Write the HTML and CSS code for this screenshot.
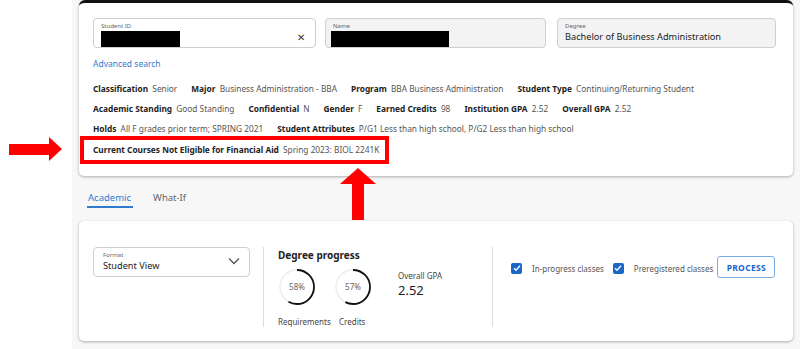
FILE: index.html
```html
<!DOCTYPE html>
<html lang="en">
<head>
  <meta charset="UTF-8">
  <title>Student Degree Audit</title>
  <link rel="stylesheet" href="styles.css">
</head>
<body>

<div class="page">
  <div class="card top-card">
    <div class="fields">
      <div class="field">
        <span class="field-label">Student ID</span>
        <div class="field-row">
          <span class="redact redact-id"></span>
          <span class="clear">&#x2715;</span>
        </div>
      </div>
      <div class="field filled">
        <span class="field-label">Name</span>
        <span class="redact redact-name"></span>
      </div>
      <div class="field filled">
        <span class="field-label">Degree</span>
        <span class="field-value">Bachelor of Business Administration</span>
      </div>
    </div>

    <a class="adv-link" href="#">Advanced search</a>

    <div class="info-row">
      <span><b>Classification</b> Senior</span>
      <span><b>Major</b> Business Administration - BBA</span>
      <span><b>Program</b> BBA Business Administration</span>
      <span><b>Student Type</b> Continuing/Returning Student</span>
    </div>
    <div class="info-row">
      <span><b>Academic Standing</b> Good Standing</span>
      <span><b>Confidential</b> N</span>
      <span><b>Gender</b> F</span>
      <span><b>Earned Credits</b> 98</span>
      <span><b>Institution GPA</b> 2.52</span>
      <span><b>Overall GPA</b> 2.52</span>
    </div>
    <div class="info-row">
      <span><b>Holds</b> All F grades prior term; SPRING 2021</span>
      <span><b>Student Attributes</b> P/G1 Less than high school, P/G2 Less than high school</span>
    </div>
    <div class="info-row">
      <span><b>Current Courses Not Eligible for Financial Aid</b> Spring 2023: BIOL 2241K</span>
    </div>
  </div>

  <div class="tabs">
    <span class="tab active">Academic</span>
    <span class="tab">What-If</span>
  </div>

  <div class="card bottom-card">
    <div class="select">
      <div>
        <span class="field-label">Format</span>
        <span class="field-value">Student View</span>
      </div>
      <svg width="12" height="8" viewBox="0 0 12 8"><path d="M1 1.5l5 5 5-5" fill="none" stroke="#555" stroke-width="1.3"/></svg>
    </div>

    <div class="progress">
      <h3>Degree progress</h3>
      <div class="progress-row">
        <div class="meter">
          <svg width="38" height="38" viewBox="0 0 38 38">
            <circle cx="19" cy="19" r="17" fill="none" stroke="#eee" stroke-width="1.5"/>
            <circle cx="19" cy="19" r="17" fill="none" stroke="#111" stroke-width="1.8"
              stroke-dasharray="62 107" transform="rotate(-90 19 19)"/>
          </svg>
          <span class="pct">58%</span>
          <span class="meter-label">Requirements</span>
        </div>
        <div class="meter second">
          <svg width="38" height="38" viewBox="0 0 38 38">
            <circle cx="19" cy="19" r="17" fill="none" stroke="#eee" stroke-width="1.5"/>
            <circle cx="19" cy="19" r="17" fill="none" stroke="#111" stroke-width="1.8"
              stroke-dasharray="61 107" transform="rotate(-90 19 19)"/>
          </svg>
          <span class="pct">57%</span>
          <span class="meter-label">Credits</span>
        </div>
        <div class="gpa">
          <span class="gpa-label">Overall GPA</span>
          <span class="gpa-value">2.52</span>
        </div>
      </div>
    </div>

    <div class="options">
      <label class="check"><span class="box"><svg width="10" height="10" viewBox="0 0 10 10"><path d="M2 5.2l2 2 4-4.4" fill="none" stroke="#fff" stroke-width="1.4"/></svg></span>In-progress classes</label>
      <label class="check"><span class="box"><svg width="10" height="10" viewBox="0 0 10 10"><path d="M2 5.2l2 2 4-4.4" fill="none" stroke="#fff" stroke-width="1.4"/></svg></span>Preregistered classes</label>
      <button class="process">PROCESS</button>
    </div>
  </div>
</div>

<!-- anotacoes em vermelho -->
<div class="mark-box"></div>
<div class="arrow-left"><span class="shaft"></span><span class="head"></span></div>
<div class="arrow-up"><span class="head"></span><span class="shaft"></span></div>

</body>
</html>
```

FILE: styles.css
```css
body {
  margin: 0;
  padding: 0;
  background: #fff;
  font-family: "Noto Sans", "Open Sans", sans-serif;
  color: #333;
  height: 349px;
  overflow: hidden;
}
.page {
  margin-left: 72px;
  background: #f7f7f7;
  height: 349px;
  padding: 0 7px 0 7px;
}
.card {
  background: #fff;
  border-radius: 5px;
  box-shadow: 0 1px 3px rgba(0,0,0,0.3);
}
.top-card {
  border-top: 3px solid #111;
  border-radius: 6px 6px 5px 5px;
  padding: 15px 15px 0 14px;
  box-sizing: border-box;
  height: 176px;
}
.fields {
  display: grid;
  grid-template-columns: 223px 221px 221px;
  column-gap: 9px;
}
.fields .field:nth-child(3) {
  margin-left: 2px;
}
.field {
  height: 30px;
  box-sizing: border-box;
  border: 1px solid #cfcfcf;
  border-radius: 4px;
  padding: 3px 7px 0 7px;
  display: flex;
  flex-direction: column;
}
.field.filled {
  background: #f3f3f3;
}
.field-label {
  font-size: 6px;
  color: #666;
  line-height: 8px;
  display: block;
}
.field-value {
  font-size: 9.2px;
  color: #222;
  line-height: 14px;
  display: block;
}
.field-row {
  display: flex;
  justify-content: space-between;
  align-items: center;
}
.redact {
  display: block;
  background: #000;
  height: 16px;
  margin-top: 1px;
}
.redact-id {
  width: 79px;
}
.redact-name {
  width: 118px;
  margin-left: -2px;
}
.clear {
  font-size: 10px;
  color: #333;
  margin-right: 3px;
  margin-top: -3px;
}
.adv-link {
  display: block;
  margin-top: 10px;
  font-size: 8.5px;
  color: #2f7bd0;
  text-decoration: none;
  line-height: 12px;
}
.info-row {
  display: flex;
  gap: 14px;
  font-size: 8.3px;
  line-height: 12px;
  color: #555;
  margin-top: 8px;
  white-space: nowrap;
}
.adv-link + .info-row {
  margin-top: 13px;
}
.info-row:last-child {
  margin-top: 9px;
}
.info-row b {
  color: #222;
  margin-right: 2px;
}
.tabs {
  display: flex;
  gap: 20px;
  padding: 15px 0 0 8px;
  height: 30px;
  box-sizing: border-box;
  font-size: 9.5px;
  color: #666;
}
.tab {
  height: 15px;
}
.tab.active {
  color: #2f7bd0;
  border-bottom: 2px solid #2f7bd0;
  padding: 0 2px 0 1px;
}
.bottom-card {
  margin-top: 15px;
  height: 120px;
  box-sizing: border-box;
  padding: 26px 15px 0 14px;
  display: flex;
  align-items: flex-start;
}
.select {
  width: 157px;
  height: 30px;
  flex-shrink: 0;
  box-sizing: border-box;
  border: 1px solid #cfcfcf;
  border-radius: 4px;
  padding: 3px 9px 0 9px;
  display: flex;
  justify-content: space-between;
  align-items: center;
}
.select > div {
  align-self: flex-start;
}
.select svg {
  margin-top: -5px;
}
.progress {
  margin-left: 13px;
  border-left: 1px solid #ddd;
  border-right: 1px solid #ddd;
  height: 80px;
  width: 230px;
  flex-shrink: 0;
  padding-left: 14px;
  box-sizing: border-box;
}
.progress h3 {
  margin: 2px 0 0 0;
  font-size: 10px;
  color: #222;
  line-height: 12px;
}
.progress-row {
  display: flex;
  margin-top: 7px;
}
.meter {
  position: relative;
  width: 56px;
  display: flex;
  flex-direction: column;
}
.meter svg {
  display: block;
}
.meter .pct {
  position: absolute;
  top: 0;
  left: 0;
  width: 38px;
  line-height: 38px;
  text-align: center;
  font-size: 8px;
  color: #666;
}
.meter-label {
  font-size: 8px;
  color: #444;
  margin-top: 11px;
  line-height: 10px;
}
.meter.second .meter-label {
  margin-left: 5px;
}
.gpa {
  margin-left: 8px;
  padding-top: 3px;
}
.gpa-label {
  display: block;
  font-size: 8px;
  color: #444;
  line-height: 10px;
}
.gpa-value {
  display: block;
  font-size: 13px;
  color: #222;
  line-height: 18px;
}
.options {
  display: flex;
  align-items: center;
  margin-left: 18px;
  margin-top: 11px;
  white-space: nowrap;
}
.check {
  display: flex;
  align-items: center;
  font-size: 8px;
  color: #555;
  margin-right: 9px;
}
.box {
  width: 11px;
  height: 11px;
  background: #1a66c9;
  border-radius: 2px;
  margin-right: 10px;
  display: flex;
  align-items: center;
  justify-content: center;
}
.check:nth-child(2) {
  margin-right: 4px;
}
.process {
  width: 58px;
  height: 22px;
  flex-shrink: 0;
  border: 1px solid #7aaee8;
  border-radius: 3px;
  background: #fff;
  color: #1a66c9;
  font-family: "Noto Sans", sans-serif;
  font-weight: bold;
  font-size: 8.5px;
  letter-spacing: 0.3px;
  padding: 0;
  margin-top: -2px;
}

/* annotations */
.mark-box {
  position: absolute;
  left: 80px;
  top: 136px;
  width: 301px;
  height: 20px;
  border: 4px solid #f00;
}
.arrow-left {
  position: absolute;
  left: 9px;
  top: 137px;
  display: flex;
  align-items: center;
}
.arrow-left .shaft {
  width: 40px;
  height: 11px;
  background: #f00;
}
.arrow-left .head {
  width: 0;
  height: 0;
  border-top: 12px solid transparent;
  border-bottom: 12px solid transparent;
  border-left: 13px solid #f00;
}
.arrow-up {
  position: absolute;
  left: 340px;
  top: 168px;
  display: flex;
  flex-direction: column;
  align-items: center;
}
.arrow-up .head {
  width: 0;
  height: 0;
  border-left: 18px solid transparent;
  border-right: 18px solid transparent;
  border-bottom: 16px solid #f00;
}
.arrow-up .shaft {
  width: 12px;
  height: 36px;
  background: #f00;
}
```
